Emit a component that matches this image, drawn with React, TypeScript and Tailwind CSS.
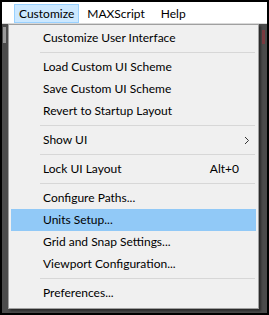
import React from 'react';

type Item =
  | { kind: 'item'; label: string; shortcut?: string; sub?: boolean; active?: boolean }
  | { kind: 'sep' };

const items: Item[] = [
  { kind: 'item', label: 'Customize User Interface' },
  { kind: 'sep' },
  { kind: 'item', label: 'Load Custom UI Scheme' },
  { kind: 'item', label: 'Save Custom UI Scheme' },
  { kind: 'item', label: 'Revert to Startup Layout' },
  { kind: 'sep' },
  { kind: 'item', label: 'Show UI', sub: true },
  { kind: 'sep' },
  { kind: 'item', label: 'Lock UI Layout', shortcut: 'Alt+0' },
  { kind: 'sep' },
  { kind: 'item', label: 'Configure Paths...' },
  { kind: 'item', label: 'Units Setup...', active: true },
  { kind: 'item', label: 'Grid and Snap Settings...' },
  { kind: 'item', label: 'Viewport Configuration...' },
  { kind: 'sep' },
  { kind: 'item', label: 'Preferences...' },
];

const App = () => {
  return (
    <div className="w-[269px] h-[315px] bg-black p-[2px] font-['Lato',sans-serif] text-[12px] text-black">
      <div className="flex h-full flex-col bg-[#4b4b4b]">
        {/* menu bar */}
        <div className="flex h-[21px] items-stretch bg-white pl-[12px] pt-[2px]">
          <div className="flex items-center border border-[#99d1ff] bg-[#cce8ff] px-[4px]">Customize</div>
          <div className="flex items-center px-[8px]">MAXScript</div>
          <div className="flex items-center px-[8px]">Help</div>
        </div>
        <div className="h-px bg-[#d9d9d9]" />

        {/* viewport area with dropdown */}
        <div className="flex flex-1 pb-[4px]">
          <div className="flex w-[6px] flex-col pt-[3px]">
            <div className="ml-[1px] h-[16px] w-[3px] bg-[#9a9a9a]" />
          </div>
          <div className="h-[285px] w-[251px] border border-[#a0a0a0] bg-[#f0f0f0] px-[2px] pt-[2px] shadow-[2px_2px_2px_rgba(0,0,0,0.45)]">
            {items.map((it, i) =>
              it.kind === 'sep' ? (
                <div key={i} className="py-[3px] pl-[29px] pr-[1px]">
                  <div className="h-px bg-[#d7d7d7]" />
                </div>
              ) : (
                <div
                  key={i}
                  className={`flex h-[22px] items-center pl-[32px] pr-[14px] ${it.active ? 'bg-[#91c9f7]' : ''}`}
                >
                  <span className="flex-1">{it.label}</span>
                  {it.shortcut && <span className="pr-[3px]">{it.shortcut}</span>}
                  {it.sub && (
                    <svg width="6" height="9" viewBox="0 0 6 9" className="mr-[-8px]">
                      <path d="M1 1 L4.5 4.5 L1 8" fill="none" stroke="#333" strokeWidth="1" />
                    </svg>
                  )}
                </div>
              )
            )}
          </div>
          <div className="flex flex-1 flex-col items-end pt-[6px]">
            <div className="mr-[2px] h-[14px] w-[3px] bg-[#7a3a40]" />
          </div>
        </div>
      </div>
    </div>
  );
};

export default App;
